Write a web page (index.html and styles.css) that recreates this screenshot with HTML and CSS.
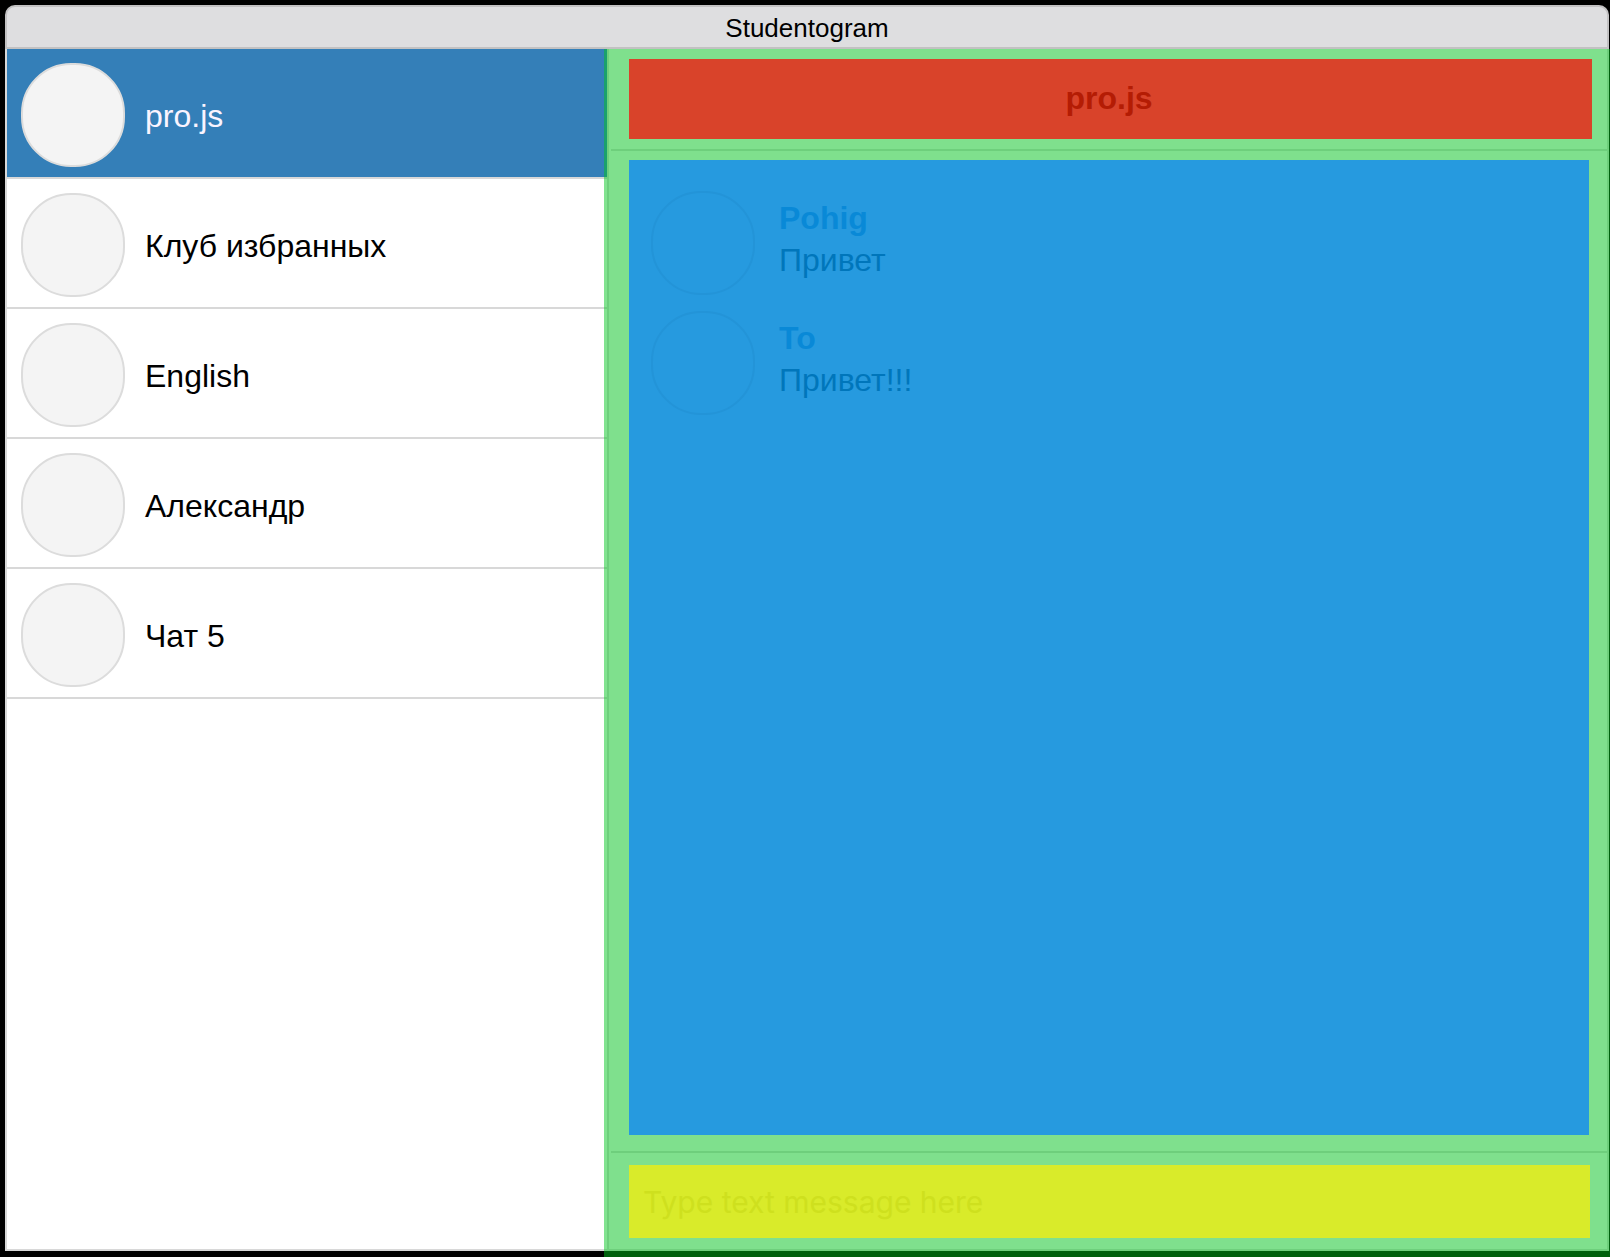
FILE: index.html
```html
<!DOCTYPE html>
<html lang="ru">
<head>
  <meta charset="utf-8">
  <meta name="viewport" content="width=device-width, initial-scale=1">
  <title>Studentogram</title>
  <link rel="stylesheet" href="styles.css">
</head>
<body>
  <div class="window">
    <header class="titlebar">Studentogram</header>
    <div class="content">
      <nav class="sidebar" aria-label="Чаты">
        <a class="chat-link chat-link--active" href="#projs" aria-current="page"><span class="avatar"></span><span class="chat-name">pro.js</span></a>
        <a class="chat-link" href="#club"><span class="avatar"></span><span class="chat-name">Клуб избранных</span></a>
        <a class="chat-link" href="#english"><span class="avatar"></span><span class="chat-name">English</span></a>
        <a class="chat-link" href="#alexander"><span class="avatar"></span><span class="chat-name">Александр</span></a>
        <a class="chat-link" href="#chat5"><span class="avatar"></span><span class="chat-name">Чат 5</span></a>
      </nav>
      <main class="chat">
        <div class="chat-head">
          <h1 class="chat-title">pro.js</h1>
        </div>
        <div class="chat-body">
          <div class="messages">
            <article class="message">
              <span class="avatar avatar--tinted"></span>
              <div class="message-text">
                <h2 class="author">Pohig</h2>
                <p class="text">Привет</p>
              </div>
            </article>
            <article class="message">
              <span class="avatar avatar--tinted"></span>
              <div class="message-text">
                <h2 class="author">To</h2>
                <p class="text">Привет!!!</p>
              </div>
            </article>
          </div>
        </div>
        <form class="chat-form">
          <input class="message-input" type="text" aria-label="Message" placeholder="Type text message here">
        </form>
      </main>
    </div>
  </div>
</body>
</html>
```

FILE: styles.css
```css
* {
  box-sizing: border-box;
}

body {
  display: flex;
  min-height: 100vh;
  margin: 0;
  padding: 5px 1px 6px 5px;
  background: #000;
  color: #000;
  font-family: "Liberation Sans", Arial, sans-serif;
  font-size: 32px;
}

.window {
  display: flex;
  flex: 1;
  flex-direction: column;
  min-width: 0;
}

.titlebar {
  height: 44px;
  border: 2px solid #c2c1c2;
  border-radius: 10px 10px 0 0;
  background: #dedee0;
  font-size: 26px;
  line-height: 42px;
  text-align: center;
}

.content {
  display: flex;
  flex: 1;
  border: 2px solid #d8d8d8;
  border-top: 0;
  background: #fff;
}

.sidebar {
  flex: 0 0 37.5%;
  min-width: 0;
}

.chat-link {
  display: flex;
  align-items: center;
  gap: 20px;
  padding: 14px 14px 10px;
  border-bottom: 2px solid #d8d8d8;
  color: #000;
  line-height: 40px;
  text-decoration: none;
}

.chat-link--active {
  background: #347fb8;
  background-clip: padding-box;
  color: #faf4ff;
}

.chat-name {
  padding-top: 2px;
}

.avatar {
  flex: none;
  width: 104px;
  height: 104px;
  border: 2px solid #dcdcdc;
  border-radius: 50px;
  background: #f4f4f4;
}

.avatar--tinted {
  border-color: #2394d8;
  background: transparent;
}

.chat {
  position: relative;
  display: flex;
  flex: 1;
  flex-direction: column;
  min-width: 0;
  padding-left: 2px;
  border-left: 2px solid #d8d8d8;
  background: #fafafa;
}

/* Translucent highlight that spills past the panel to the page edge */
.chat::after {
  position: absolute;
  inset: 0 -3px -8px -5px;
  background: rgba(0, 198, 28, 0.49);
  content: "";
  pointer-events: none;
}

.chat-head {
  padding: 10px 15px 10px 18px;
  border-bottom: 2px solid #d8d8d8;
}

.chat-title,
.messages,
.message-input {
  position: relative;
  z-index: 1;
}

.chat-title {
  margin: 0;
  padding: 0 3px 2px 0;
  background: #d9432a;
  color: #b41c04;
  font-size: 32px;
  line-height: 78px;
  text-align: center;
}

.chat-body {
  display: flex;
  flex: 1;
  padding: 9px 18px 16px;
}

.messages {
  display: flex;
  flex: 1;
  flex-direction: column;
  gap: 16px;
  padding: 31px 22px;
  background: #269adf;
}

.message {
  display: flex;
  gap: 24px;
}

.message-text {
  padding-top: 6px;
  line-height: 42px;
}

.author,
.text {
  margin: 0;
  font-size: 32px;
}

.author {
  color: #0989d7;
}

.text {
  color: #0076bb;
}

.chat-form {
  display: flex;
  padding: 12px 17px 11px 18px;
  border-top: 2px solid #d8d8d8;
}

.message-input {
  flex: 1;
  min-width: 0;
  height: 73px;
  padding: 1px 14px 0;
  border: 0;
  border-radius: 0;
  background: #d9eb2a;
  color: #5c6600;
  font-family: Inter, sans-serif;
  font-size: 30px;
}

.message-input::placeholder {
  color: #cee01e;
  opacity: 1;
}
```
